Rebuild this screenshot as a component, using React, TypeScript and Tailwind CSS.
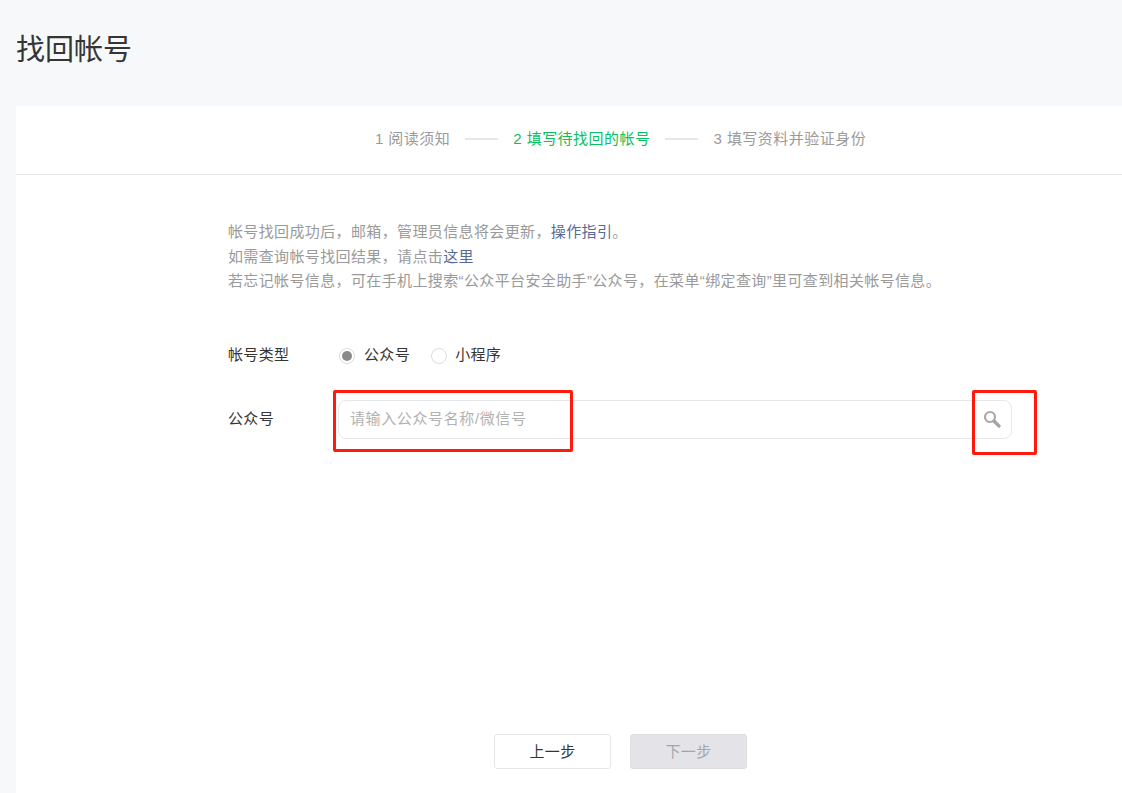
import React from "react";

const font = { fontFamily: '"Liberation Sans", "Noto Sans CJK SC", sans-serif' };

function Step({ n, label, active }: { n: number; label: string; active?: boolean }) {
  return (
    <span className={active ? "tracking-[0.47px] text-[#07c160]" : "tracking-[0.47px] text-[#9a9a9a]"}>
      {n} {label}
    </span>
  );
}

function Line() {
  return <span className="mx-[15px] h-[2px] w-[33px] bg-[#e4e8eb]" />;
}

export default function App() {
  return (
    <div style={font} className="relative h-[793px] w-[1122px] overflow-hidden bg-[#f6f8f9] text-[15px] tracking-[0.37px] text-[#353535]">
      <h1 className="h-[106px] pl-4 pt-[30px] text-[29px] leading-[40px] font-normal tracking-normal text-[#353535]">找回帐号</h1>
      <div className="ml-4 flex h-[687px] w-[1209px] flex-col bg-white">
        <div className="flex h-[69px] items-center justify-center border-b border-[#e4e8eb] pb-[2px]">
          <div className="flex items-center">
            <Step n={1} label="阅读须知" />
            <Line />
            <Step n={2} label="填写待找回的帐号" active />
            <Line />
            <Step n={3} label="填写资料并验证身份" />
          </div>
        </div>
        <div className="flex flex-1 flex-col pl-[212px]">
          <div className="mt-[44px] pt-[1px] leading-[24.5px] text-[#9a9a9a]">
            <p>帐号找回成功后，邮箱，管理员信息将会更新，<span className="text-[#576b95]">操作指引</span>。</p>
            <p>如需查询帐号找回结果，请点击<span className="text-[#576b95]">这里</span></p>
            <p>若忘记帐号信息，可在手机上搜索“公众平台安全助手”公众号，在菜单“绑定查询”里可查到相关帐号信息。</p>
          </div>
          <div className="mt-[50px] flex h-[24px] items-center">
            <span className="w-[111px]">帐号类型</span>
            <span className="flex h-[16px] w-[16px] items-center justify-center rounded-full border border-[#dcdcdc] bg-white">
              <span className="h-[10px] w-[10px] rounded-full bg-[#8a8a8a]" />
            </span>
            <span className="ml-[9px]">公众号</span>
            <span className="ml-[21px] h-[16px] w-[16px] rounded-full border border-[#dcdcdc] bg-white" />
            <span className="ml-[8px]">小程序</span>
          </div>
          <div className="mt-[32px] flex h-[39px] items-center">
            <span className="w-[110px] pt-[1px]">公众号</span>
            <div className="flex h-[39px] w-[674px] items-center justify-between rounded-[8px] border border-[#e4e8eb] pl-[11px] pr-[10px]">
              <span className="pt-[1px] tracking-[0.62px] text-[#b2b2b2]">请输入公众号名称/微信号</span>
              <svg width="18" height="18" viewBox="0 0 18 18" fill="none">
                <circle cx="7" cy="7" r="5" stroke="#a8a8a8" strokeWidth="2.2" />
                <path d="M11 11l5 5" stroke="#a3a3a3" strokeWidth="3.2" strokeLinecap="round" />
              </svg>
            </div>
          </div>
        </div>
        <div className="flex h-[59px] justify-center gap-[19px]">
          <button className="h-[35px] w-[117px] rounded-[3px] border border-[#e4e8eb] bg-white pt-[2px] text-[#353535]">上一步</button>
          <button className="h-[35px] w-[117px] rounded-[3px] border border-[#dedee2] bg-[#e4e4e8] pt-[2px] text-[#a5a5a5]">下一步</button>
        </div>
      </div>
      <div className="absolute left-[333px] top-[390px] h-[62px] w-[240px] rounded-[2px] border-[3px] border-[#ff1a0e]" />
      <div className="absolute left-[972px] top-[390px] h-[65px] w-[65px] rounded-[2px] border-[3px] border-[#ff1a0e]" />
    </div>
  );
}
